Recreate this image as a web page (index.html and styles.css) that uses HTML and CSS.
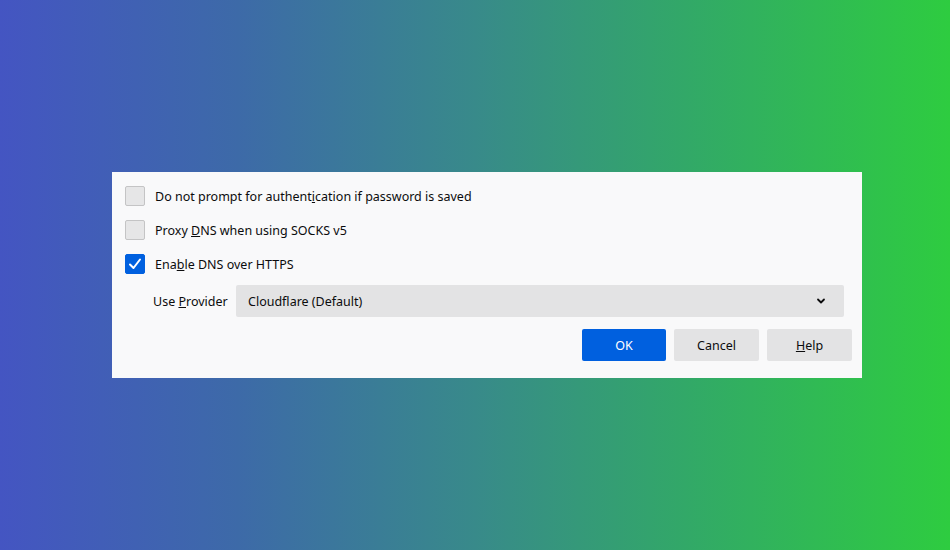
FILE: index.html
```html
<!DOCTYPE html>
<html>
<head>
	<meta charset="utf-8">
	<title>Connection Settings</title>
	<link rel="stylesheet" href="styles.css">
</head>
<body>
	<div class="dialog">
		<label class="check-row">
			<span class="checkbox"></span>
			<span>Do not prompt for authent<u>i</u>cation if password is saved</span>
		</label>
		<label class="check-row">
			<span class="checkbox"></span>
			<span>Proxy <u>D</u>NS when using SOCKS v5</span>
		</label>
		<label class="check-row">
			<span class="checkbox checked">
				<svg width="20" height="20" viewBox="0 0 20 20"><path d="M5 10.5 L8.5 14 L15 5.5" fill="none" stroke="#fff" stroke-width="2" stroke-linecap="round" stroke-linejoin="round"/></svg>
			</span>
			<span>Ena<u>b</u>le DNS over HTTPS</span>
		</label>
		<div class="provider-row">
			<span class="provider-label">Use <u>P</u>rovider</span>
			<div class="select">
				<span>Cloudflare (Default)</span>
				<svg width="10" height="10" viewBox="0 0 10 10"><path d="M2 3.5 L5 6.5 L8 3.5" fill="none" stroke="#0c0c0d" stroke-width="1.8" stroke-linecap="round" stroke-linejoin="round"/></svg>
			</div>
		</div>
		<div class="buttons">
			<button class="btn primary">OK</button>
			<button class="btn">Cancel</button>
			<button class="btn"><u>H</u>elp</button>
		</div>
	</div>
</body>
</html>
```

FILE: styles.css
```css
* {
	box-sizing: border-box;
}

html, body {
	margin: 0;
	height: 100%;
}

body {
	display: flex;
	align-items: center;
	padding-left: 112px;
	background: linear-gradient(to right, #4455c2 0%, #3d6aa8 25%, #388a8a 50%, #32a868 72%, #2ecc40 100%);
	font-family: "Noto Sans", "Open Sans", sans-serif;
	font-size: 12.5px;
	color: #0c0c0d;
}

.dialog {
	width: 750px;
	background-color: #f9f9fa;
	padding: 14px 10px 17px 13px;
	display: flex;
	flex-direction: column;
}

.check-row {
	display: flex;
	align-items: center;
	gap: 10px;
	height: 20px;
	margin-bottom: 14px;
}

.check-row:nth-child(3) {
	margin-bottom: 11px;
}

.checkbox {
	width: 20px;
	height: 20px;
	border: 1px solid #c4c4c5;
	border-radius: 2px;
	background-color: #e6e6e7;
	display: flex;
}

.checkbox.checked {
	background-color: #0060df;
	border-color: #0060df;
}

.checkbox svg {
	margin: -1px;
}

.provider-row {
	display: flex;
	align-items: center;
	padding-left: 28px;
	padding-right: 8px;
	margin-bottom: 12px;
}

.provider-label {
	width: 83px;
}

.select {
	flex-grow: 1;
	height: 32px;
	border-radius: 2px;
	background-color: #e3e3e4;
	display: flex;
	align-items: center;
	justify-content: space-between;
	padding: 0 18px 0 12px;
}

.buttons {
	display: flex;
	justify-content: flex-end;
	gap: 8px;
}

.btn {
	width: 85px;
	height: 32px;
	border: 0;
	border-radius: 2px;
	background-color: #e3e3e4;
	font: inherit;
	color: #0c0c0d;
	padding: 0;
}

.btn.primary {
	width: 84px;
	background-color: #0060df;
	color: #fff;
}
```
